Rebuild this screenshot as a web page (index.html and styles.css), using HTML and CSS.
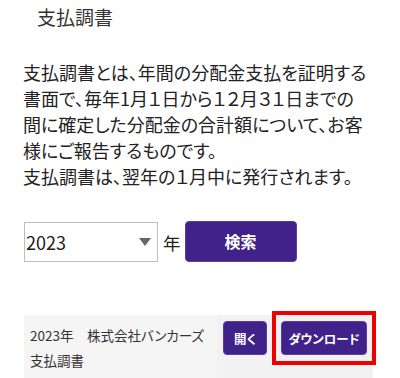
FILE: index.html
```html
<!DOCTYPE html>
<html lang="ja">
<head>
<meta charset="utf-8">
<link rel="stylesheet" href="styles.css">
</head>
<body>
<h1 class="title">支払調書</h1>
<p class="desc">支払調書とは、年間の分配金支払を証明する<br>書面で、毎年1月１日から１２月３１日までの<br>間に確定した分配金の合計額について、お客<br>様にご報告するものです。<br>支払調書は、翌年の１月中に発行されます。</p>
<div class="search">
  <div class="select-wrap">
    <select class="year"><option>2023</option></select>
  </div>
  <span class="nen">年</span>
  <button class="btn btn-search">検索</button>
</div>
<div class="row">
  <div class="cell-name">2023年　株式会社バンカーズ<br>支払調書</div>
  <div class="cell-actions">
    <button class="btn btn-small btn-open">開く</button>
    <div class="dl-wrap">
      <button class="btn btn-small btn-dl">ダウンロード</button>
      <span class="highlight"></span>
    </div>
  </div>
</div>
</body>
</html>
```
FILE: styles.css
```css
html, body {
  margin: 0;
  padding: 0;
  background: #fff;
}
body {
  font-family: "Noto Sans CJK JP", "Noto Sans", sans-serif;
  color: #222;
  font-feature-settings: "palt";
}
.title {
  margin: 0;
  padding: 0 0 0 37px;
  font-size: 19px;
  font-weight: 400;
  line-height: 34px;
  color: #333;
}
.desc {
  margin: 25px 0 0 23px;
  font-size: 18px;
  line-height: 26px;
  white-space: nowrap;
}
.search {
  display: flex;
  align-items: center;
  margin: 33px 0 0 24px;
}
.select-wrap {
  position: relative;
  width: 134px;
  height: 40px;
}
.year {
  -webkit-appearance: none;
  appearance: none;
  width: 134px;
  height: 40px;
  box-sizing: border-box;
  border: 1px solid #bdbdbd;
  border-radius: 0;
  background: #fff;
  font-family: "Noto Sans CJK JP", sans-serif;
  font-size: 18px;
  color: #222;
  padding: 0 0 0 1px;
  margin: 0;
}
.select-wrap::after {
  content: "";
  position: absolute;
  right: 7px;
  top: 16px;
  border-left: 6px solid transparent;
  border-right: 6px solid transparent;
  border-top: 8px solid #666;
}
.nen {
  font-size: 17.5px;
  margin-left: 5px;
  margin-right: 4px;
}
.btn {
  font-family: "Noto Sans CJK JP", sans-serif;
  font-feature-settings: "palt";
  background: #41218a;
  color: #fff;
  border: 1px solid #5a3e9c;
  border-radius: 4px;
  font-weight: 700;
  cursor: pointer;
  padding: 0;
  margin: 0;
  white-space: nowrap;
  flex-shrink: 0;
}
.btn-search {
  width: 112px;
  height: 41px;
  font-size: 16px;
  margin-top: -2px;
}
.row {
  display: flex;
  margin: 53px 0 0 24px;
  width: 349px;
  min-height: 63px;
}
.cell-name {
  width: 193px;
  flex-shrink: 0;
  background: #f5f5f5;
  padding: 8px 0 0 6px;
  box-sizing: border-box;
  font-size: 13.5px;
  line-height: 25px;
  color: #333;
  white-space: nowrap;
}
.cell-actions {
  flex: 1;
  background: #f2f2f2;
  display: flex;
  align-items: flex-start;
  padding: 6px 0 0 6px;
}
.btn-small {
  height: 34px;
  font-size: 12.5px;
}
.btn-open {
  width: 44px;
}
.dl-wrap {
  position: relative;
  flex-shrink: 0;
  margin-left: 14px;
}
.btn-dl {
  width: 86px;
  display: block;
}
.highlight {
  position: absolute;
  left: -9px;
  top: -10px;
  width: 104px;
  height: 54px;
  box-sizing: border-box;
  border: 4px solid #ee0000;
}
```
